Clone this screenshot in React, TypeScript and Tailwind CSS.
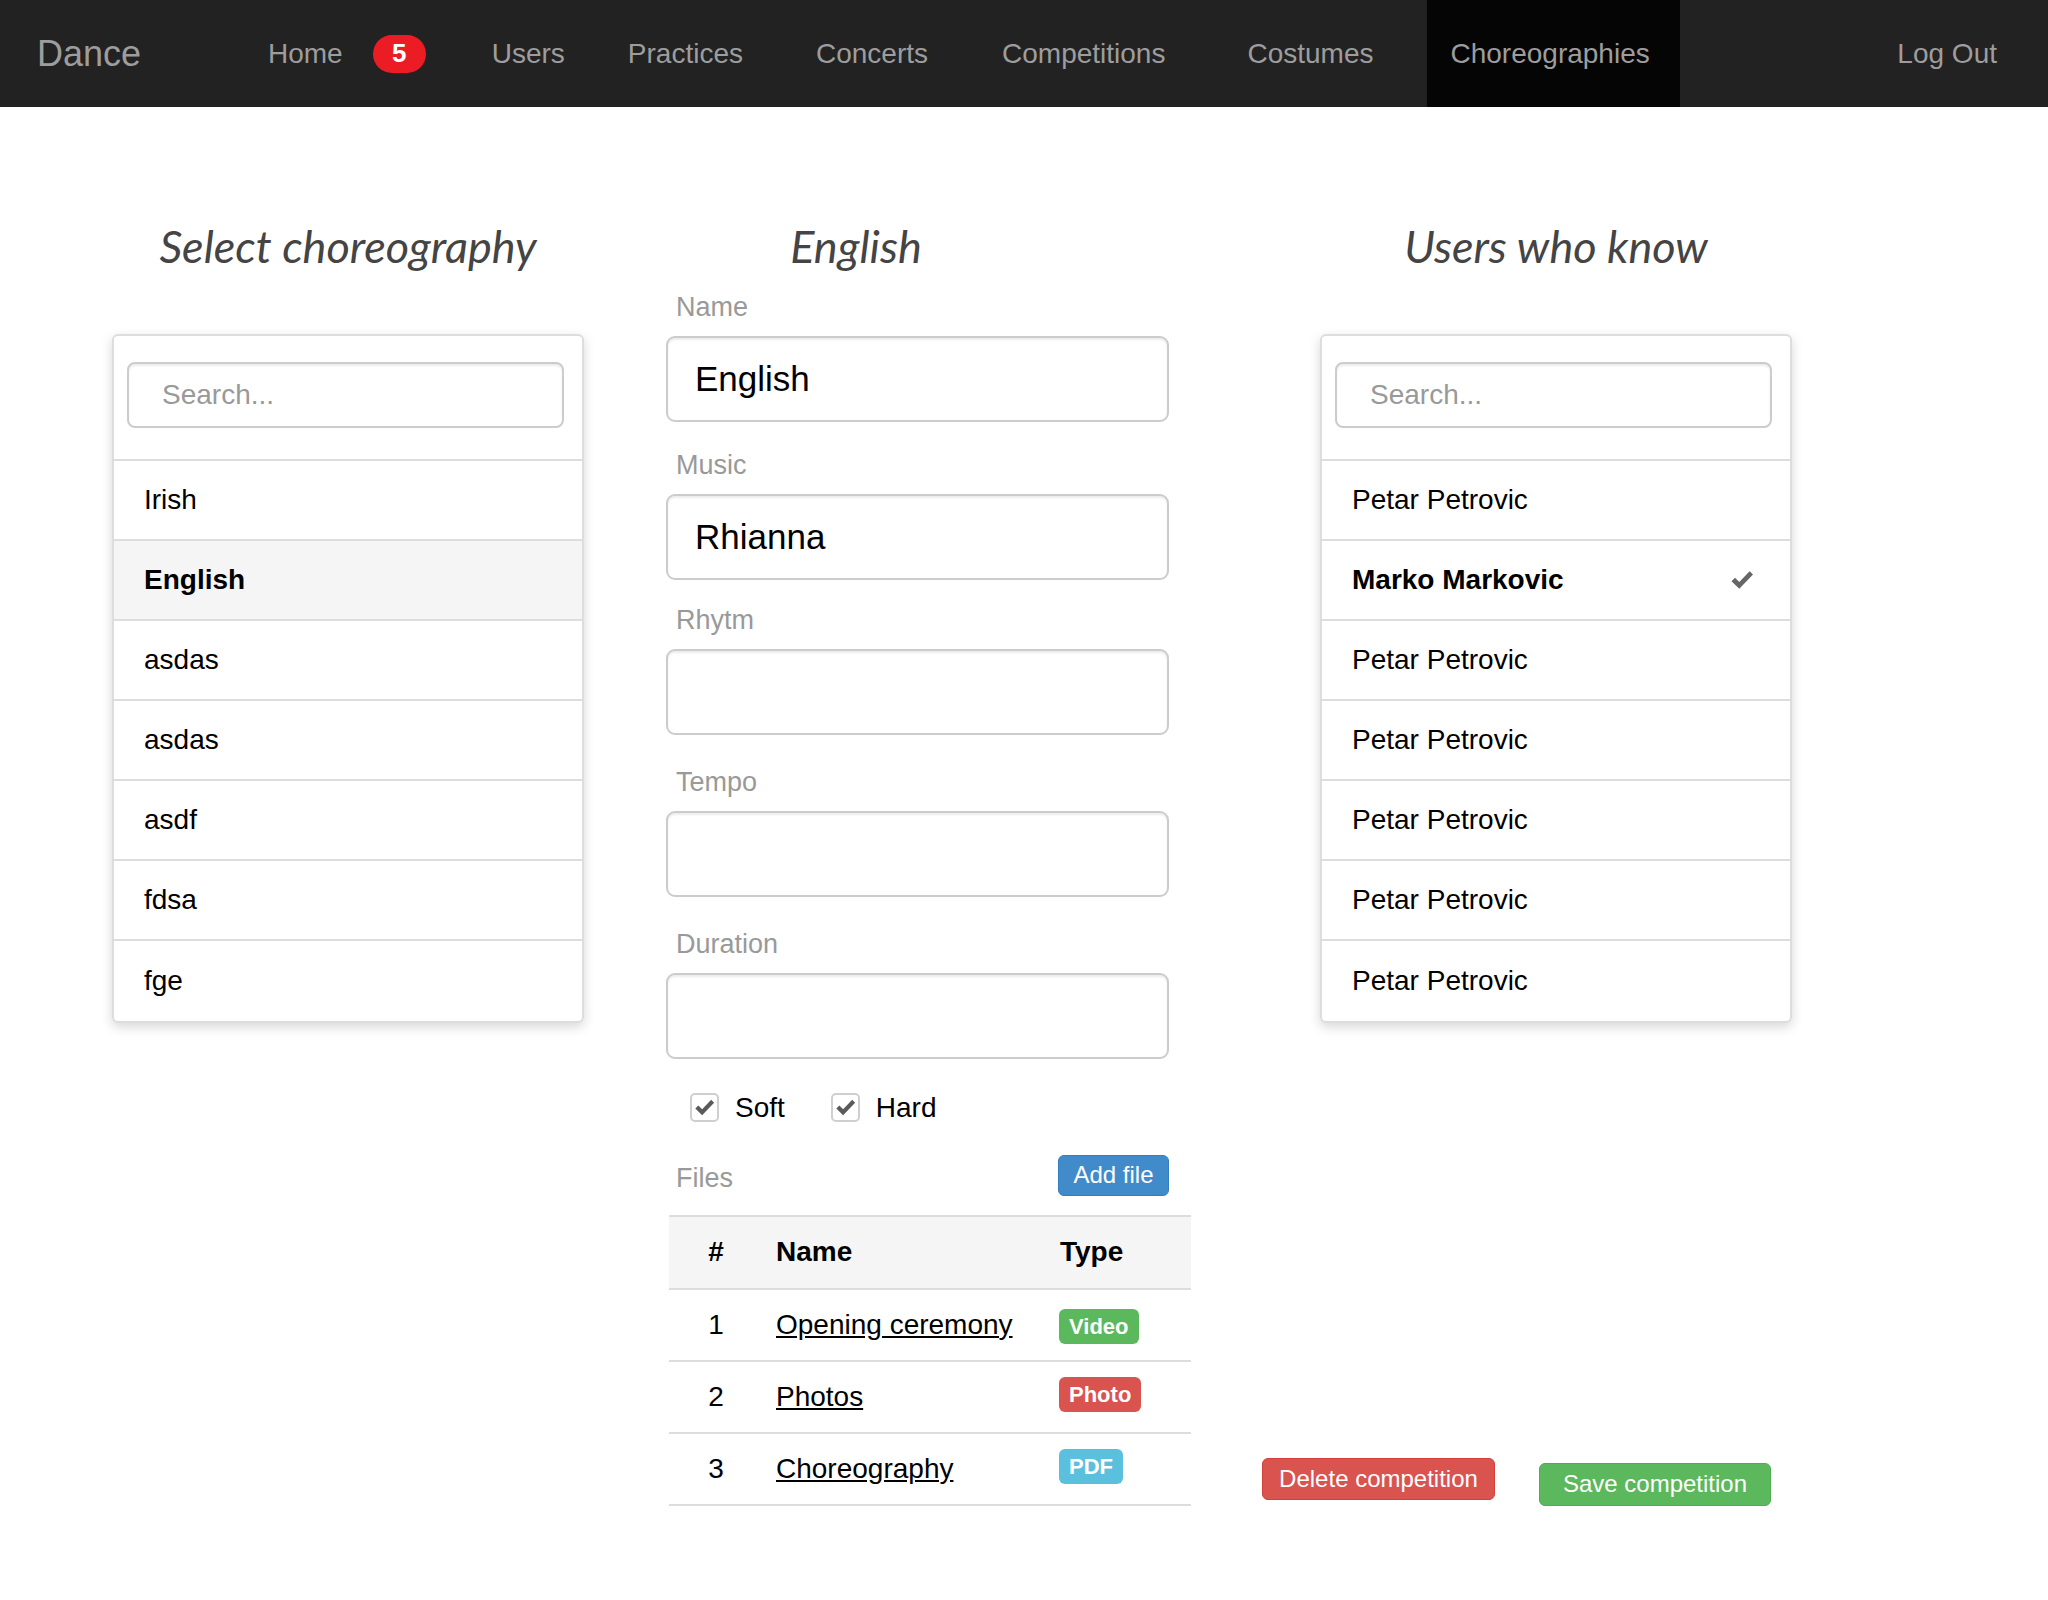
import React from "react";

const choreographies = ["Irish", "English", "asdas", "asdas", "asdf", "fdsa", "fge"];
const users = [
  "Petar Petrovic",
  "Marko Markovic",
  "Petar Petrovic",
  "Petar Petrovic",
  "Petar Petrovic",
  "Petar Petrovic",
  "Petar Petrovic",
];

const files = [
  { id: 1, name: "Opening ceremony", type: "Video", color: "bg-[#5cb85c]", up: false },
  { id: 2, name: "Photos", type: "Photo", color: "bg-[#d9534f]", up: true },
  { id: 3, name: "Choreography", type: "PDF", color: "bg-[#5bc0de]", up: true },
];

// heavy check mark, like the ✔ glyph
const Check = ({ className }: { className?: string }) => (
  <svg viewBox="0 0 24 24" className={className} fill="currentColor">
    <path d="M1.5 13.2 L5 9.8 L9.3 14 L19.6 3.2 L23 6.6 L9.3 20.8 Z" />
  </svg>
);

const Navbar = () => {
  return (
    <nav className="flex h-[107px] items-center bg-[#222222] text-[28px] text-[#9d9d9d]">
      <div className="w-[268px] flex-none pl-[37px] text-[36px] leading-none">Dance</div>
      <span>Home</span>
      <span className="ml-[30px] flex h-[38px] w-[53px] items-center justify-center rounded-[19px] bg-[#ec1c24] text-[26px] font-bold text-white">
        5
      </span>
      <span className="ml-[66px]">Users</span>
      <span className="ml-[63px]">Practices</span>
      <span className="ml-[73px]">Concerts</span>
      <span className="ml-[74px]">Competitions</span>
      <span className="ml-[82px]">Costumes</span>
      <div className="ml-[54px] flex h-full items-center bg-[#050505] pl-[23px] pr-[30px]">Choreographies</div>
      <span className="ml-auto mr-[51px]">Log Out</span>
    </nav>
  );
};

const Heading = ({ children, className }: { children: React.ReactNode; className?: string }) => (
  <h2
    className={`h-[48px] whitespace-nowrap text-center text-[45px] italic leading-[48px] text-[#444444] ${className ?? ""}`}
    style={{ fontFamily: "Lato, 'Open Sans', sans-serif" }}
  >
    {children}
  </h2>
);

const SearchPanel = ({ items, bold, checked }: { items: string[]; bold: number; checked?: boolean }) => {
  return (
    <div className="mt-[64px] w-[472px] rounded-[6px] border-2 border-[#dddddd] bg-white shadow-[0_4px_12px_rgba(0,0,0,0.16)]">
      <div className="pb-[31px] pl-[13px] pr-[18px] pt-[26px]">
        <input
          placeholder="Search..."
          className="h-[66px] w-full rounded-[8px] border-2 border-[#cccccc] pl-[33px] text-[28px] text-black shadow-[inset_0_2px_2px_rgba(0,0,0,0.075)] outline-none placeholder:text-[#999999]"
        />
      </div>
      {items.map((item, i) => (
        <div
          key={i}
          className={`flex items-center justify-between border-t-2 border-[#dddddd] pl-[30px] pr-[36px] text-[28px] text-black ${
            i === items.length - 1 ? "h-[82px]" : "h-[80px]"
          } ${i === bold ? "font-bold" : ""} ${i === bold && !checked ? "bg-[#f5f5f5]" : ""}`}
        >
          <span>{item}</span>
          {checked && i === bold && <Check className="h-[24px] w-[24px] text-[#666666]" />}
        </div>
      ))}
    </div>
  );
};

const Field = ({ label, value, className }: { label: string; value?: string; className?: string }) => (
  <div className={className}>
    <div className="h-[36px] pl-[10px] text-[27px] leading-[36px] text-[#999999]">{label}</div>
    <input
      readOnly
      value={value ?? ""}
      className="mt-[11px] h-[86px] w-[503px] rounded-[9px] border-2 border-[#cccccc] px-[27px] text-[35px] text-black shadow-[inset_0_2px_2px_rgba(0,0,0,0.075)] outline-none"
    />
  </div>
);

const CheckBox = ({ label }: { label: string }) => (
  <label className="flex items-center">
    <span className="flex h-[29px] w-[29px] items-center justify-center rounded-[5px] border-2 border-[#cfcfcf] bg-white">
      <Check className="h-[21px] w-[21px] text-[#5a5a5a]" />
    </span>
    <span className="ml-[16px] text-[28px] leading-[28px] text-black">{label}</span>
  </label>
);

const FilesTable = () => {
  return (
    <table className="mt-[16px] ml-[3px] w-[522px] table-fixed border-collapse text-[28px] text-black">
      <thead>
        <tr className="h-[73px] border-y-2 border-[#dddddd] bg-[#f5f5f5]">
          <th className="w-[94px] text-center font-bold">#</th>
          <th className="w-[284px] pl-[13px] text-left font-bold">Name</th>
          <th className="pl-[13px] text-left font-bold">Type</th>
        </tr>
      </thead>
      <tbody>
        {files.map((f) => (
          <tr key={f.id} className="h-[72px] border-b-2 border-[#dddddd]">
            <td className="text-center">{f.id}</td>
            <td className="pl-[13px]">
              <a href="#" className="text-black underline">
                {f.name}
              </a>
            </td>
            <td className="pl-[12px]">
              <span
                className={`inline-block rounded-[6px] px-[10px] text-[22px] font-bold leading-[35px] text-white ${f.color} ${
                  f.up ? "mb-[10px]" : ""
                }`}
              >
                {f.type}
              </span>
            </td>
          </tr>
        ))}
      </tbody>
    </table>
  );
};

export default function App() {
  return (
    <div className="min-h-[1600px] bg-white" style={{ fontFamily: "'Liberation Sans', Arial, sans-serif" }}>
      <Navbar />
      <main className="flex pl-[112px] pt-[115px]">
        <section className="flex w-[472px] flex-col">
          <Heading>Select choreography</Heading>
          <SearchPanel items={choreographies} bold={1} />
        </section>

        <section className="ml-[82px] flex w-[525px] flex-col">
          <Heading className="w-[380px]">English</Heading>
          <Field label="Name" value="English" className="mt-[19px]" />
          <Field label="Music" value="Rhianna" className="mt-[25px]" />
          <Field label="Rhytm" className="mt-[22px]" />
          <Field label="Tempo" className="mt-[29px]" />
          <Field label="Duration" className="mt-[29px]" />
          <div className="mt-[34px] flex items-center pl-[24px]">
            <CheckBox label="Soft" />
            <div className="ml-[46px]">
              <CheckBox label="Hard" />
            </div>
          </div>
          <div className="mt-[30px] flex w-[503px] items-center justify-between">
            <span className="pl-[10px] pt-[6px] text-[27px] text-[#999999]">Files</span>
            <button className="h-[41px] w-[111px] rounded-[6px] border border-[#357ebd] bg-[#428bca] text-[24px] text-white">
              Add file
            </button>
          </div>
          <FilesTable />
        </section>

        <section className="ml-[71px] flex w-[530px] flex-col">
          <div className="ml-[58px] w-[472px]">
            <Heading>Users who know</Heading>
            <SearchPanel items={users} bold={1} checked />
          </div>
          <div className="mt-auto flex items-end">
            <button className="mb-[6px] h-[42px] w-[233px] rounded-[6px] border border-[#d43f3a] bg-[#d9534f] text-[24px] text-white">
              Delete competition
            </button>
            <button className="ml-[44px] h-[43px] w-[232px] rounded-[6px] border border-[#4cae4c] bg-[#5cb85c] text-[24px] text-white">
              Save competition
            </button>
          </div>
        </section>
      </main>
    </div>
  );
}
